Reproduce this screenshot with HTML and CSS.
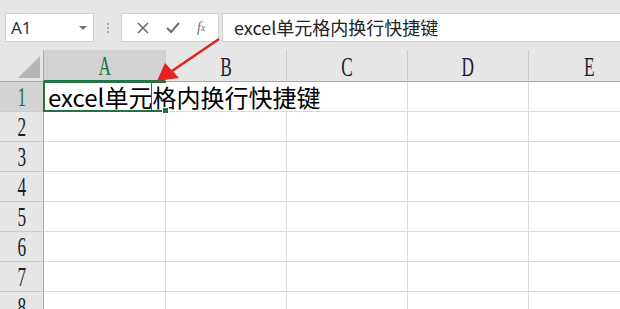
FILE: index.html
```html
<!DOCTYPE html>
<html lang="zh-CN">
<head>
    <meta charset="UTF-8">
    <title>excel单元格内换行快捷键</title>
    <link rel="stylesheet" href="styles.css">
</head>
<body>

    <!-- Formula bar -->
    <div class="toolbar">
        <div class="name-box">
            <span>A1</span>
            <span class="drop"></span>
        </div>
        <div class="grip"><i></i><i></i><i></i></div>
        <div class="fx-buttons">
            <svg width="12" height="12" viewBox="0 0 12 12"><path d="M1 1 L11 11 M11 1 L1 11" stroke="#6d6d6d" stroke-width="1.6" fill="none"/></svg>
            <svg width="14" height="12" viewBox="0 0 14 12"><path d="M1 6 L5 10 L13 1" stroke="#6d6d6d" stroke-width="2" fill="none"/></svg>
            <span class="fx">f<sub>x</sub></span>
        </div>
        <div class="formula-input">excel单元格内换行快捷键</div>
    </div>

    <!-- Sheet -->
    <div class="sheet">
        <div class="corner"><span class="tri"></span></div>
        <div class="col-head active"><span>A</span></div>
        <div class="col-head"><span>B</span></div>
        <div class="col-head"><span>C</span></div>
        <div class="col-head"><span>D</span></div>
        <div class="col-head"><span>E</span></div>

        <div class="row-head active"><span>1</span></div>
        <div class="cell selected no-right">
            <span class="value">excel单元格内换行快捷键</span>
            <span class="caret"></span>
            <span class="handle"></span>
        </div>
        <div class="cell no-right"></div>
        <div class="cell"></div>
        <div class="cell"></div>
        <div class="cell"></div>

        <div class="row-head"><span>2</span></div>
        <div class="cell"></div><div class="cell"></div><div class="cell"></div><div class="cell"></div><div class="cell"></div>
        <div class="row-head"><span>3</span></div>
        <div class="cell"></div><div class="cell"></div><div class="cell"></div><div class="cell"></div><div class="cell"></div>
        <div class="row-head"><span>4</span></div>
        <div class="cell"></div><div class="cell"></div><div class="cell"></div><div class="cell"></div><div class="cell"></div>
        <div class="row-head"><span>5</span></div>
        <div class="cell"></div><div class="cell"></div><div class="cell"></div><div class="cell"></div><div class="cell"></div>
        <div class="row-head"><span>6</span></div>
        <div class="cell"></div><div class="cell"></div><div class="cell"></div><div class="cell"></div><div class="cell"></div>
        <div class="row-head"><span>7</span></div>
        <div class="cell"></div><div class="cell"></div><div class="cell"></div><div class="cell"></div><div class="cell"></div>
        <div class="row-head"><span>8</span></div>
        <div class="cell"></div><div class="cell"></div><div class="cell"></div><div class="cell"></div><div class="cell"></div>
    </div>

    <!-- Red annotation arrow -->
    <svg class="arrow" width="620" height="309" viewBox="0 0 620 309">
        <line x1="219" y1="39" x2="172" y2="71" stroke="#e52222" stroke-width="2.6"/>
        <polygon points="157,81 165,63 179,78" fill="#e52222"/>
    </svg>

</body>
</html>
```

FILE: styles.css
```css
/* Page */
body {
    margin: 0;
    width: 620px;
    height: 309px;
    overflow: hidden;
    position: relative;
    background: #fff;
    font-family: "Noto Sans CJK SC", "Noto Sans", sans-serif;
}

/* Formula bar area */
.toolbar {
    height: 50px;
    box-sizing: border-box;
    padding: 13px 0 0 5px;
    background: #e6e6e6;
    display: flex;
    align-items: flex-start;
}

.name-box {
    width: 89px;
    height: 29px;
    box-sizing: border-box;
    background: #fff;
    border: 1px solid #d2d2d2;
    display: flex;
    align-items: center;
    justify-content: space-between;
    padding: 0 6px 0 5px;
    font-family: "Noto Sans", "Liberation Sans", sans-serif;
    font-size: 17px;
    color: #333;
}

.drop {
    width: 0;
    height: 0;
    border-left: 4px solid transparent;
    border-right: 4px solid transparent;
    border-top: 4px solid #777;
}

.grip {
    width: 27px;
    height: 29px;
    display: flex;
    flex-direction: column;
    align-items: center;
    justify-content: center;
    gap: 2px;
}

.grip i {
    width: 2px;
    height: 2px;
    background: #aaa;
}

.fx-buttons {
    width: 98px;
    height: 29px;
    box-sizing: border-box;
    background: #fff;
    border: 1px solid #d2d2d2;
    display: flex;
    align-items: center;
    justify-content: space-around;
    padding: 0 4px 0 6px;
}

.fx {
    font-family: "Liberation Serif", serif;
    font-style: italic;
    font-size: 14px;
    color: #6d6d6d;
}

.fx sub {
    font-size: 10px;
    vertical-align: 1px;
}

.formula-input {
    flex: 1;
    margin-left: 3px;
    height: 29px;
    box-sizing: border-box;
    background: #fff;
    border: 1px solid #d2d2d2;
    border-right: none;
    padding-left: 11px;
    font-size: 18px;
    line-height: 26px;
    color: #222;
}

/* Grid */
.sheet {
    display: grid;
    grid-template-columns: 44px 122px 121px 121px 121px 121px;
    grid-template-rows: 32px repeat(8, 30px);
}

.corner {
    background: #e6e6e6;
    border-right: 1px solid #a8a8a8;
    border-bottom: 1px solid #a8a8a8;
    position: relative;
}

.tri {
    position: absolute;
    right: 3px;
    bottom: 3px;
    width: 0;
    height: 0;
    border-left: 22px solid transparent;
    border-bottom: 22px solid #b4b4b4;
}

.col-head,
.row-head {
    background: #e6e6e6;
    display: flex;
    justify-content: center;
    font-family: "Liberation Serif", serif;
    font-size: 27px;
    color: #1c1c30;
    box-sizing: border-box;
}

.col-head {
    align-items: center;
    padding-top: 3px;
    border-right: 1px solid #cbcbcb;
    border-bottom: 1px solid #a8a8a8;
}

.row-head {
    align-items: center;
    padding-top: 1px;
    border-right: 1px solid #a8a8a8;
    border-bottom: 1px solid #cbcbcb;
}

.col-head span,
.row-head span {
    display: inline-block;
    transform: scaleX(0.64);
}

.col-head.active,
.row-head.active {
    background: #d3d3d3;
    color: #217346;
}

.col-head.active {
    border-bottom: 2px solid #217346;
}

.cell {
    box-sizing: border-box;
    border-right: 1px solid #dadada;
    border-bottom: 1px solid #dadada;
    position: relative;
}

.cell.no-right {
    border-right-color: transparent;
}

.cell.selected {
    border: 2px solid #217346;
    border-right: none;
    margin-top: -1px;
    margin-left: -1px;
}

.value {
    position: absolute;
    left: 3px;
    top: -1px;
    z-index: 2;
    white-space: nowrap;
    font-size: 24px;
    line-height: 30px;
    color: #000;
}

.caret {
    position: absolute;
    left: 106px;
    top: 0;
    width: 1px;
    height: 28px;
    background: #555;
    z-index: 3;
}

.handle {
    position: absolute;
    right: -3px;
    bottom: -4px;
    width: 5px;
    height: 5px;
    background: #217346;
    border: 1px solid #fff;
    z-index: 3;
}

/* Annotation */
.arrow {
    position: absolute;
    left: 0;
    top: 0;
    pointer-events: none;
}
```
